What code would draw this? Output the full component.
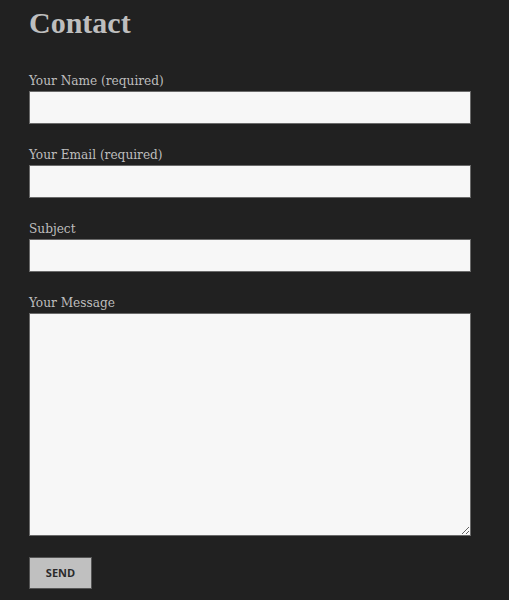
const FIELDS = [
  { label: "Your Name (required)", type: "text" },
  { label: "Your Email (required)", type: "email" },
  { label: "Subject", type: "text" },
];

export default function App() {
  return (
    <div className="min-h-[600px] bg-[#212121] px-[29px] pt-[5px] font-['DejaVu_Serif_Condensed','DejaVu_Serif',serif] text-[#bebebe]">
      <h1 className="font-['Liberation_Serif',serif] text-[30px] leading-[36px] font-bold">Contact</h1>

      <form className="mt-[31px]" onSubmit={(e) => e.preventDefault()}>
        {FIELDS.map((f) => (
          <label key={f.label} className="mb-[22px] block">
            <span className="mb-[2px] block text-[13.5px] leading-[17px]">{f.label}</span>
            <input
              type={f.type}
              className="block h-[33px] w-[442px] border border-[#6a6a6a] bg-[#f7f7f7] outline-none"
            />
          </label>
        ))}

        <label className="block">
          <span className="mb-[2px] block text-[13.5px] leading-[17px]">Your Message</span>
          <textarea className="block h-[223px] w-[442px] border border-[#6a6a6a] bg-[#f7f7f7] outline-none" />
        </label>

        <button
          type="submit"
          className="mt-[21px] h-[32px] w-[63px] border border-[#555] bg-[#c0c0c0] font-['Open_Sans',sans-serif] text-[11px] font-bold text-[#2a2a2a]"
        >
          SEND
        </button>
      </form>
    </div>
  );
}
